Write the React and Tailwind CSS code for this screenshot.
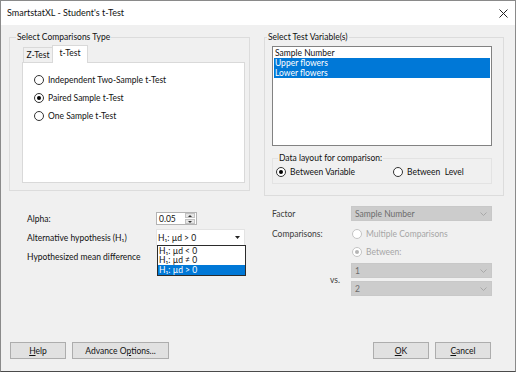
import React from "react";

function Radio({ checked, disabled, label, className = "" }) {
  return (
    <div className={`flex items-center ${className}`}>
      <div
        className={`w-[10px] h-[10px] rounded-full border bg-white flex items-center justify-center ${
          disabled ? "border-[#c4c4c4]" : "border-[#333333]"
        }`}
      >
        {checked && (
          <div className={`w-[4px] h-[4px] rounded-full ${disabled ? "bg-[#b5b5b5]" : "bg-black"}`} />
        )}
      </div>
      <span className={`ml-[4px] ${disabled ? "text-[#a6a6a6]" : ""}`}>{label}</span>
    </div>
  );
}

function DisabledSelect({ value, className = "" }) {
  return (
    <div
      className={`w-[141px] h-[15px] bg-[#cccccc] border border-[#c8c8c8] text-[#6d6d6d] flex items-center justify-between pl-[3px] pr-[4px] ${className}`}
    >
      <span>{value}</span>
      <svg width="7" height="4" viewBox="0 0 7 4">
        <path d="M0.5 0.5 L3.5 3.5 L6.5 0.5" fill="none" stroke="#a8a8a8" strokeWidth="1" />
      </svg>
    </div>
  );
}

function Button({ children, className = "" }) {
  return (
    <div
      className={`h-[17px] bg-[#e1e1e1] border border-[#adadad] flex items-center justify-center ${className}`}
    >
      {children}
    </div>
  );
}

export default function App() {
  return (
    <div className="w-[516px] h-[372px] flex flex-col bg-[#f0f0f0] border border-[#8a8a8a] border-b-[#4a4a4a] text-[8.5px] leading-[12px] text-[#111] font-['Lato',sans-serif] overflow-hidden">
      {/* title bar */}
      <div className="h-[24px] shrink-0 bg-white flex items-center justify-between pl-[6px] pr-[7px] text-[9px]">
        <span>SmartstatXL - Student's t-Test</span>
        <svg width="9" height="9" viewBox="0 0 9 9">
          <path d="M0.5 0.5 L8.5 8.5 M8.5 0.5 L0.5 8.5" stroke="#222" strokeWidth="1" />
        </svg>
      </div>

      {/* group boxes */}
      <div className="flex items-start mt-[6px] ml-[8px] gap-[14px]">
        <fieldset className="w-[241px] h-[160px] border border-[#dcdcdc]">
          <legend className="ml-[6px] px-[1px]">Select Comparisons Type</legend>
          <div className="ml-[12px] mt-[2px]">
            <div className="flex items-end h-[17px]">
              <div className="ml-[1px] w-[30px] h-[15px] border border-b-0 border-[#d9d9d9] bg-[#f0f0f0] flex items-center justify-center">
                Z-Test
              </div>
              <div className="relative z-10 -mb-px -ml-px w-[36px] h-[18px] bg-white border border-b-0 border-[#d9d9d9] flex items-start pt-[1px] justify-center">
                t-Test
              </div>
            </div>
            <div className="w-[223px] h-[121px] bg-white border border-[#d9d9d9] pt-[8px] pl-[11px] flex flex-col">
              <Radio className="h-[18px]" label="Independent Two-Sample t-Test" />
              <Radio className="h-[18px]" checked label="Paired Sample t-Test" />
              <Radio className="h-[18px]" label="One Sample t-Test" />
            </div>
          </div>
        </fieldset>

        <fieldset className="w-[240px] h-[165px] border border-[#dcdcdc]">
          <legend className="ml-[2px] px-[1px]">Select Test Variable(s)</legend>
          <div className="ml-[7px] mt-[3px] w-[220px] h-[100px] bg-white border border-[#828282] pt-[1px] px-[1px] leading-[10px]">
            <div className="h-[10px] px-[1px]">Sample Number</div>
            <div className="h-[10px] px-[1px] bg-[#0078d7] text-white">Upper flowers</div>
            <div className="h-[10px] px-[1px] bg-[#0078d7] text-white">Lower flowers</div>
          </div>
          <fieldset className="ml-[7px] mt-[6px] w-[220px] h-[32px] border border-[#e3e3e3]">
            <legend className="ml-[5px] px-[1px]">Data layout for comparison:</legend>
            <div className="flex items-center mt-[2px] pl-[3px]">
              <Radio className="w-[117px]" checked label="Between Variable" />
              <Radio label="Between  Level" className="whitespace-pre" />
            </div>
          </fieldset>
        </fieldset>
      </div>

      {/* lower options */}
      <div className="flex mt-[10px]">
        <div className="ml-[26px] w-[219px] pt-[6px] flex flex-col">
          <div className="flex items-center h-[13px]">
            <span className="w-[129px]">Alpha:</span>
            <div className="w-[41px] h-[13px] bg-white border border-[#b3b3b3] flex items-center justify-between pl-[2px]">
              <span>0.05</span>
              <div className="w-[10px] h-[11px] mr-[1px] flex flex-col gap-[1px]">
                <div className="h-[5px] bg-[#e6e6e6] border border-[#c2c2c2] flex items-center justify-center">
                  <svg width="4" height="2" viewBox="0 0 4 2"><path d="M0 2 L2 0 L4 2 Z" fill="#333" /></svg>
                </div>
                <div className="h-[5px] bg-[#e6e6e6] border border-[#c2c2c2] flex items-center justify-center">
                  <svg width="4" height="2" viewBox="0 0 4 2"><path d="M0 0 L2 2 L4 0 Z" fill="#333" /></svg>
                </div>
              </div>
            </div>
          </div>
          <div className="flex items-center h-[17px] mt-[4px]">
            <span className="w-[129px]">Alternative hypothesis (H₁)</span>
            <div className="relative w-[89px] h-[17px] bg-white border border-[#e3e3e3] flex items-center justify-between pl-[1px] pr-[4px]">
              <span>H₁: µd &gt; 0</span>
              <svg width="5" height="3" viewBox="0 0 5 3"><path d="M0 0 L2.5 3 L5 0 Z" fill="#222" /></svg>
              <div className="absolute left-0 top-full w-[89px] bg-white border border-[#2b2b2b] leading-[10px] z-10">
                <div className="h-[10px] px-[1px] overflow-hidden">H₁: µd &lt; 0</div>
                <div className="h-[9px] px-[1px] overflow-hidden leading-[9px]">H₁: µd ≠ 0</div>
                <div className="h-[10px] px-[1px] overflow-hidden bg-[#0078d7] text-white">H₁: µd &gt; 0</div>
              </div>
            </div>
          </div>
          <div className="flex items-center h-[14px] mt-[4px]">
            <span>Hypothesized mean difference</span>
          </div>
        </div>

        <div className="ml-[26px] w-[220px] flex flex-col text-[#3c3c3c]">
          <div className="flex items-center h-[15px]">
            <span className="w-[79px]">Factor</span>
            <DisabledSelect value="Sample Number" />
          </div>
          <div className="flex items-center h-[12px] mt-[7px]">
            <span className="w-[80px]">Comparisons:</span>
            <Radio disabled label="Multiple Comparisons" />
          </div>
          <div className="flex items-center h-[12px] mt-[6px]">
            <span className="w-[80px]" />
            <Radio disabled checked label="Between:" />
          </div>
          <div className="flex mt-[5px]">
            <div className="w-[79px] flex items-center pl-[58px]">vs.</div>
            <div className="flex flex-col gap-[3px]">
              <DisabledSelect value="1" />
              <DisabledSelect value="2" />
            </div>
          </div>
        </div>
      </div>

      {/* buttons */}
      <div className="mt-auto flex justify-between pl-[9px] pr-[24px] pb-[12px]">
        <div className="flex gap-[6px]">
          <Button className="w-[56px]"><span><u>H</u>elp</span></Button>
          <Button className="w-[97px]"><span>Advance O<u>p</u>tions...</span></Button>
        </div>
        <div className="flex gap-[6px]">
          <Button className="w-[56px]"><span><u>O</u>K</span></Button>
          <Button className="w-[56px]"><span><u>C</u>ancel</span></Button>
        </div>
      </div>
    </div>
  );
}
